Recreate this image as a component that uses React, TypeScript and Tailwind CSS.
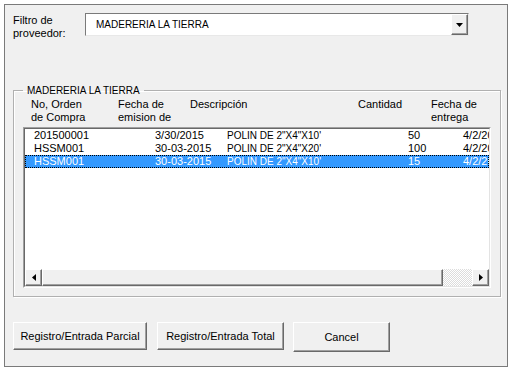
import React from "react";

function RaisedBtn({ className, children }: { className: string; children?: React.ReactNode }) {
  return (
    <div
      className={
        "flex items-center justify-center border border-t-white border-l-white border-r-[#696969] border-b-[#696969] bg-[#f0f0f0] shadow-[inset_-1px_-1px_0_#a0a0a0] " +
        className
      }
    >
      {children}
    </div>
  );
}

const rows = [
  { a: "201500001", b: "3/30/2015", c: "POLIN DE 2\"X4\"X10'", d: "50", e: "4/2/2015" },
  { a: "HSSM001", b: "30-03-2015", c: "POLIN DE 2\"X4\"X20'", d: "100", e: "4/2/2015" },
  { a: "HSSM001", b: "30-03-2015", c: "POLIN DE 2\"X4\"X10'", d: "15", e: "4/2/2015", sel: true },
];

export default function App() {
  return (
    <div className="w-[511px] h-[369px] bg-white p-[4px] text-[11px] text-black font-['Liberation_Sans',Arial,sans-serif]">
      <div className="w-[504px] h-[363px] border border-[#7a7a7a] bg-[#f0f0f0] flex flex-col">
        {/* top row */}
        <div className="flex mt-[8px] ml-[8px]">
          <div className="w-[72px] leading-[13px] mt-[1px]">
            Filtro de
            <br />
            proveedor:
          </div>
          <div className="w-[384px] h-[23px] flex border border-t-[#7a7a7a] border-l-[#7a7a7a] border-r-[#e8e8e8] border-b-[#e8e8e8] bg-white">
            <div className="flex-1 flex items-center pl-[10px] text-[10px]">MADERERIA LA TIERRA</div>
            <RaisedBtn className="w-[17px] h-full">
              <svg width="7" height="4" viewBox="0 0 7 4">
                <path d="M0 0H7L3.5 4Z" fill="#000" />
              </svg>
            </RaisedBtn>
          </div>
        </div>

        {/* group */}
        <fieldset className="mt-[44px] ml-[8px] w-[488px] border border-[#b0b0b0] px-[9px] pb-[8px] shadow-[inset_1px_1px_0_#fff,1px_1px_0_#fff]">
          <legend className="px-[4px] leading-[13px] text-[10px]">MADERERIA LA TIERRA</legend>
          <div className="flex h-[26px] mt-[1px] leading-[13px] pl-[8px] whitespace-nowrap overflow-hidden">
            <div className="w-[87px]">
              No, Orden
              <br />
              de Compra
            </div>
            <div className="w-[72px]">
              Fecha de
              <br />
              emision de
            </div>
            <div className="w-[168px]">Descripción</div>
            <div className="w-[73px]">Cantidad</div>
            <div className="flex-1">
              Fecha de
              <br />
              entrega
            </div>
          </div>
          <div className="mt-[3px] w-[468px] h-[161px] border border-t-[#a0a0a0] border-l-[#a0a0a0] border-r-white border-b-white">
            <div className="w-full h-full flex flex-col border border-t-[#696969] border-l-[#696969] border-r-[#e3e3e3] border-b-[#e3e3e3] bg-white">
              <div className="flex-1 overflow-hidden">
                {rows.map((r, i) => (
                  <div
                    key={i}
                    className={
                      "flex h-[13px] leading-[13px] pl-[9px] whitespace-nowrap overflow-hidden " +
                      (r.sel
                        ? "bg-[#3399ff] text-white outline outline-1 outline-dotted outline-black -outline-offset-1"
                        : "")
                    }
                  >
                    <div className="w-[121px] shrink-0">{r.a}</div>
                    <div className="w-[72px] shrink-0">{r.b}</div>
                    <div className="w-[181px] shrink-0 text-[10px]">{r.c}</div>
                    <div className="w-[55px] shrink-0">{r.d}</div>
                    <div className="shrink-0">{r.e}</div>
                  </div>
                ))}
              </div>
              <div className="h-[17px] flex">
                <RaisedBtn className="w-[17px] h-full">
                  <svg width="4" height="7" viewBox="0 0 4 7">
                    <path d="M4 0V7L0 3.5Z" fill="#000" />
                  </svg>
                </RaisedBtn>
                <RaisedBtn className="flex-1 h-full" />
                <div className="w-[29px] h-full bg-[repeating-conic-gradient(#dcdcdc_0_25%,#ffffff_0_50%)] bg-[length:2px_2px]" />
                <RaisedBtn className="w-[17px] h-full">
                  <svg width="4" height="7" viewBox="0 0 4 7">
                    <path d="M0 0V7L4 3.5Z" fill="#000" />
                  </svg>
                </RaisedBtn>
              </div>
            </div>
          </div>
        </fieldset>

        {/* buttons */}
        <div className="flex items-start mt-[25px] ml-[8px]">
          <RaisedBtn className="w-[134px] h-[28px]">Registro/Entrada Parcial</RaisedBtn>
          <RaisedBtn className="w-[127px] h-[28px] ml-[10px]">Registro/Entrada Total</RaisedBtn>
          <RaisedBtn className="w-[97px] h-[30px] ml-[9px]">Cancel</RaisedBtn>
        </div>
      </div>
    </div>
  );
}
